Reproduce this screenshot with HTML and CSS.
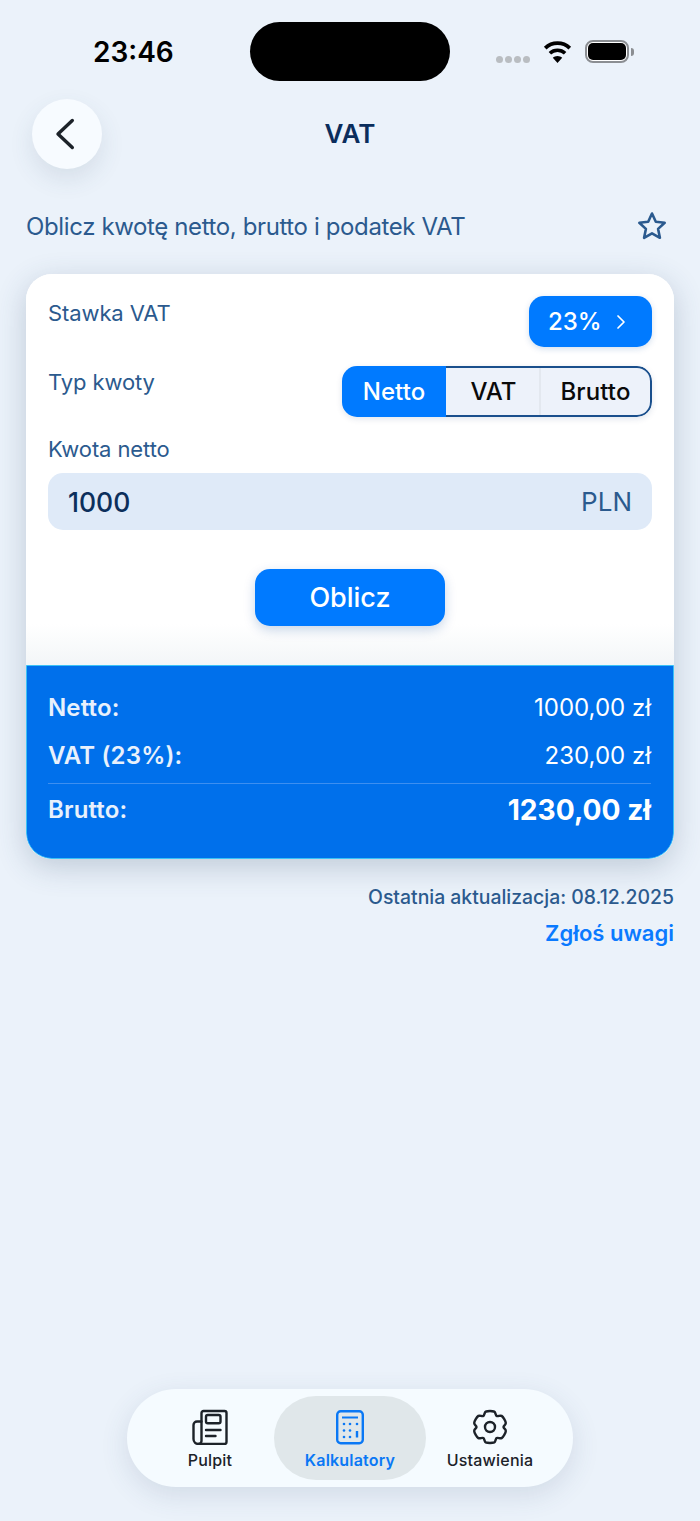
FILE: index.html
```html
<!DOCTYPE html>
<html lang="pl">
<head>
<meta charset="utf-8">
<title>VAT</title>
<link rel="stylesheet" href="styles.css">
</head>
<body>
<div class="page">
  <div class="status">
    <div class="time">23:46</div>
    <div class="island"></div>
    <div class="sys">
      <div class="dots"><i></i><i></i><i></i><i></i></div>
      <svg class="wifi" width="31" height="22" viewBox="0 0 31 22"><path d="M15.500 2.200c4.700 0 9 1.800 12.300 4.900M15.500 2.200c-4.700 0-9 1.800-12.300 4.900" fill="none" stroke="#000" stroke-width="3.800"/><path d="M7.900 12.200c2-1.900 4.700-3 7.600-3s5.600 1.100 7.600 3" fill="none" stroke="#000" stroke-width="3.600"/><path d="M15.500 22l-4.700-5.200c1.200-1.100 2.900-1.800 4.700-1.800s3.500.7 4.700 1.800z" fill="#000"/></svg>
      <div class="batt"><div class="batt-fill"></div></div>
      <div class="batt-tip"></div>
    </div>
  </div>

  <header class="nav">
    <button class="back" aria-label="Wstecz">
      <svg width="24" height="34" viewBox="0 0 24 34"><path d="M19.300 3.500 L5 17 L19.300 30.500" fill="none" stroke="#1c2229" stroke-width="3.400" stroke-linecap="round" stroke-linejoin="round"/></svg>
    </button>
    <h1 class="title">VAT</h1>
    <div class="nav-spacer"></div>
  </header>

  <div class="sub">
    <p class="sub-text">Oblicz kwotę netto, brutto i podatek VAT</p>
    <svg class="star" width="32" height="32" viewBox="0 0 32 32"><path d="M16 3.500l3.800 8.200 8.900 1.100-6.600 6.100 1.800 8.900-7.900-4.500-7.900 4.500 1.800-8.900-6.600-6.100 8.900-1.100z" fill="none" stroke="#2b5a8e" stroke-width="2.600" stroke-linejoin="round"/></svg>
  </div>

  <main class="card">
    <section class="form">
      <div class="row row-rate">
        <span class="label label-rate">Stawka VAT</span>
        <button class="rate">23%
          <svg width="12" height="16" viewBox="0 0 12 16"><path d="M3 2l6 6-6 6" fill="none" stroke="#fff" stroke-width="1.700" stroke-linecap="round" stroke-linejoin="round"/></svg>
        </button>
      </div>
      <div class="row row-type">
        <span class="label label-type">Typ kwoty</span>
        <div class="seg">
          <div class="seg-item seg-active">Netto</div>
          <div class="seg-item seg-vat">VAT</div>
          <div class="seg-item seg-brutto">Brutto</div>
        </div>
      </div>
      <div class="label label-amount">Kwota netto</div>
      <div class="input"><span class="input-val">1000</span><span class="input-cur">PLN</span></div>
      <div class="action"><button class="calc">Oblicz</button></div>
    </section>
    <section class="result">
      <div class="res-row res-netto"><span class="res-key">Netto:</span><span class="res-val">1000,00 zł</span></div>
      <div class="res-row res-vat"><span class="res-key">VAT (23%):</span><span class="res-val">230,00 zł</span></div>
      <div class="res-row res-total"><span class="res-key">Brutto:</span><span class="res-big">1230,00 zł</span></div>
    </section>
  </main>

  <div class="meta">
    <div class="updated">Ostatnia aktualizacja: 08.12.2025</div>
    <div class="report">Zgłoś uwagi</div>
  </div>

  <div class="grow"></div>

  <nav class="tabs">
    <div class="tab">
      <svg width="36" height="36" viewBox="0 0 36 36" fill="none" stroke="#1c2229" stroke-width="2.400" stroke-linecap="round" stroke-linejoin="round"><path d="M9.500 12.500V4a2 2 0 0 1 2-2h21a2 2 0 0 1 2 2v29a2 2 0 0 1-2 2H6.500"/><path d="M9.500 12.500H5A3.500 3.500 0 0 0 1.500 16v14a5 5 0 0 0 5 5 3 3 0 0 0 3-3z"/><rect x="14" y="6" width="14.500" height="8.300" rx="1.800"/><path d="M14 21h14.500M14 27h9.500"/></svg>
      <span class="tab-label">Pulpit</span>
    </div>
    <div class="tab tab-active">
      <svg width="28" height="36" viewBox="0 0 28 36" fill="none" stroke="#0a78f5"><rect x="1.200" y="2.200" width="25.600" height="32" rx="3.500" stroke-width="2.400"/><path d="M6 8.500h16" stroke-width="2"/><path d="M21 22v6.500" stroke-width="2.400"/><g fill="#0a78f5" stroke="none"><circle cx="8" cy="15" r="1.300"/><circle cx="14" cy="15" r="1.300"/><circle cx="21" cy="15" r="1.300"/><circle cx="8" cy="21.500" r="1.300"/><circle cx="14" cy="21.500" r="1.300"/><circle cx="8" cy="28" r="1.300"/><circle cx="14" cy="28" r="1.300"/></g></svg>
      <span class="tab-label">Kalkulatory</span>
    </div>
    <div class="tab">
      <svg width="34" height="36" viewBox="0 0 34 36" fill="none" stroke="#1c2229" stroke-width="2.400" stroke-linejoin="round"><path d="M12.800 2.600c1.500-.8 6.900-.8 8.400 0 1.500.9 1.200 3.500 2.400 4.300 1.300.7 3.500-.7 5 0 1.500.9 4.200 5.500 4.200 7.200 0 1.700-2.300 2.600-2.300 3.900s2.300 2.200 2.300 3.900c0 1.700-2.700 6.300-4.200 7.200-1.500.7-3.700-.7-5 0-1.200.8-.9 3.400-2.400 4.300-1.500.8-6.900.8-8.400 0-1.500-.9-1.200-3.500-2.400-4.300-1.300-.7-3.500.7-5 0-1.500-.9-4.200-5.500-4.200-7.200 0-1.700 2.300-2.600 2.300-3.900s-2.300-2.200-2.300-3.900c0-1.700 2.700-6.300 4.200-7.200 1.500-.7 3.700.7 5 0 1.200-.8.900-3.400 2.400-4.300z"/><circle cx="17" cy="18" r="5"/></svg>
      <span class="tab-label">Ustawienia</span>
    </div>
  </nav>
</div>
</body>
</html>
```

FILE: styles.css
```css
* { box-sizing: border-box; }
html, body { margin: 0; padding: 0; }
body {
  width: 700px;
  height: 1521px;
  background: #ebf2fa;
  font-family: Inter, "Liberation Sans", sans-serif;
  overflow: hidden;
}
button { font-family: inherit; border: 0; padding: 0; }
.page {
  height: 1521px;
  display: flex;
  flex-direction: column;
}
.status {
  height: 99px;
  padding: 22px 0 0 93px;
  display: flex;
  align-items: flex-start;
}
.time {
  width: 157px;
  margin-top: 14px;
  font-size: 28px;
  line-height: 32px;
  font-weight: 600;
  color: #000;
}
.island {
  width: 200px;
  height: 59px;
  border-radius: 30px;
  background: #000;
}
.sys {
  margin-left: 46px;
  margin-top: 18px;
  display: flex;
  align-items: center;
  height: 23px;
}
.dots { display: flex; gap: 2px; align-self: flex-end; margin-right: 12px; }
.dots i {
  display: block;
  width: 7px;
  height: 7px;
  border-radius: 50%;
  background: #b9bdc1;
}
.wifi { margin-right: 12px; }
.batt {
  width: 44px;
  height: 23px;
  border: 2px solid #8b8e92;
  border-radius: 8px;
  padding: 1px;
  background: #fff;
}
.batt-fill { height: 100%; background: #000; border-radius: 5px; }
.batt-tip {
  width: 3px;
  height: 8px;
  margin-left: 2px;
  background: #8b8e92;
  border-radius: 0 3px 3px 0;
}
.nav {
  padding: 0 32px;
  height: 70px;
  display: flex;
  align-items: center;
}
.back {
  width: 70px;
  height: 70px;
  border-radius: 50%;
  background: #f7fbff;
  box-shadow: 0 10px 24px rgba(60, 80, 110, .12);
  display: flex;
  align-items: center;
  justify-content: center;
  padding-right: 4px;
}
.title {
  flex: 1;
  margin: 0;
  text-align: center;
  font-size: 26px;
  line-height: 32px;
  font-weight: 600;
  color: #0a2d5c;
}
.nav-spacer { width: 70px; }
.sub {
  margin-top: 38px;
  padding: 0 32px 0 26px;
  height: 40px;
  display: flex;
  align-items: center;
  justify-content: space-between;
}
.sub-text {
  margin: 0;
  font-size: 24px;
  line-height: 32px;
  color: #2b5a8e;
  letter-spacing: -.38px;
}
.star { display: block; margin-top: -2px; }
.card {
  margin: 27px 26px 0;
  height: 585px;
  border-radius: 26px;
  overflow: hidden;
  background: #fff;
  box-shadow: 0 8px 30px rgba(50, 75, 110, .24);
  display: flex;
  flex-direction: column;
}
.form {
  height: 391px;
  padding: 22px 22px 0;
  background: linear-gradient(#fff 0, #fff 350px, #f3f6f8 391px);
}
.row { display: flex; justify-content: space-between; align-items: flex-start; }
.label { font-size: 22px; line-height: 30px; color: #2b5a8e; letter-spacing: -.1px; }
.label-rate { margin-top: 2px; }
.label-type { margin-top: 1px; }
.rate {
  width: 123px;
  height: 51px;
  border-radius: 15px;
  background: #007aff;
  color: #fff;
  font-size: 24px;
  font-weight: 500;
  display: flex;
  align-items: center;
  gap: 13px;
  padding-left: 19px;
  box-shadow: 0 2px 6px rgba(0, 80, 160, .18);
}
.row-type { margin-top: 19px; }
.seg {
  width: 310px;
  height: 51px;
  border-radius: 15px;
  background: #edf2fa;
  display: flex;
  overflow: hidden;
  box-shadow: 0 2px 6px rgba(0, 50, 110, .12);
  font-size: 24px;
  font-weight: 500;
  letter-spacing: .1px;
  color: #0a0a0a;
}
.seg-item { display: flex; align-items: center; justify-content: center; }
.seg-active {
  width: 104px;
  background: #007aff;
  color: #fff;
}
.seg-vat {
  width: 95px;
  border-top: 2px solid #1a4f8c;
  border-bottom: 2px solid #1a4f8c;
  box-shadow: inset -2px 0 0 #e3e8ef;
}
.seg-brutto {
  flex: 1;
  border: 2px solid #1a4f8c;
  border-left: 0;
  border-radius: 0 15px 15px 0;
}
.label-amount { margin-top: 17px; }
.input {
  margin-top: 9px;
  height: 57px;
  border-radius: 15px;
  background: #dfeaf8;
  display: flex;
  align-items: center;
  justify-content: space-between;
  padding: 0 20px;
}
.input-val { font-size: 26.500px; font-weight: 500; color: #0c2f5c; }
.input-cur { font-size: 26px; color: #2b5a8e; }
.action { margin-top: 39px; display: flex; justify-content: center; }
.calc {
  width: 190px;
  height: 57px;
  border-radius: 15px;
  background: #007aff;
  color: #fff;
  font-size: 27px;
  font-weight: 500;
  box-shadow: 0 4px 12px rgba(0, 70, 150, .22);
}
.result {
  flex: 1;
  background: #0070eb;
  border: 1px solid #3bc2f6;
  border-radius: 0 0 26px 26px;
  padding: 0 22px 0 21px;
  color: #fff;
}
.res-row { display: flex; justify-content: space-between; align-items: center; }
.res-netto { height: 32px; margin-top: 25px; }
.res-vat { height: 32px; margin-top: 16px; }
.res-total {
  margin-top: 12px;
  padding-top: 4px;
  border-top: 1px solid #3d8ff0;
  height: 48px;
}
.res-key { font-size: 24px; font-weight: 600; letter-spacing: .15px; color: #e8f1fc; }
.res-val { font-size: 24px; }
.res-big { font-size: 28.200px; font-weight: 700; }
.meta { margin-top: 23px; padding: 0 26px; text-align: right; }
.updated { font-size: 19.400px; line-height: 30px; color: #2b5a8e; font-weight: 500; }
.report { margin-top: 6px; font-size: 22px; line-height: 30px; font-weight: 600; color: #0a7aff; }
.grow { flex: 1; }
.tabs {
  align-self: center;
  width: 446px;
  height: 98px;
  margin-bottom: 34px;
  border-radius: 49px;
  background: #f5fbff;
  box-shadow: 0 8px 28px rgba(60, 80, 110, .14);
  padding: 7px;
  display: flex;
  justify-content: center;
}
.tab {
  width: 128px;
  display: flex;
  flex-direction: column;
  align-items: center;
  padding-top: 13px;
  border-radius: 43px;
  color: #1c2229;
}
.tab svg { display: block; }
.tab-active {
  width: 152px;
  background: #e0e7ea;
  color: #0a78f5;
}
.tab-label {
  margin-top: 5px;
  font-size: 16px;
  line-height: 20px;
  font-weight: 500;
  letter-spacing: .2px;
}
.tab-active .tab-label { font-weight: 600; }
```
